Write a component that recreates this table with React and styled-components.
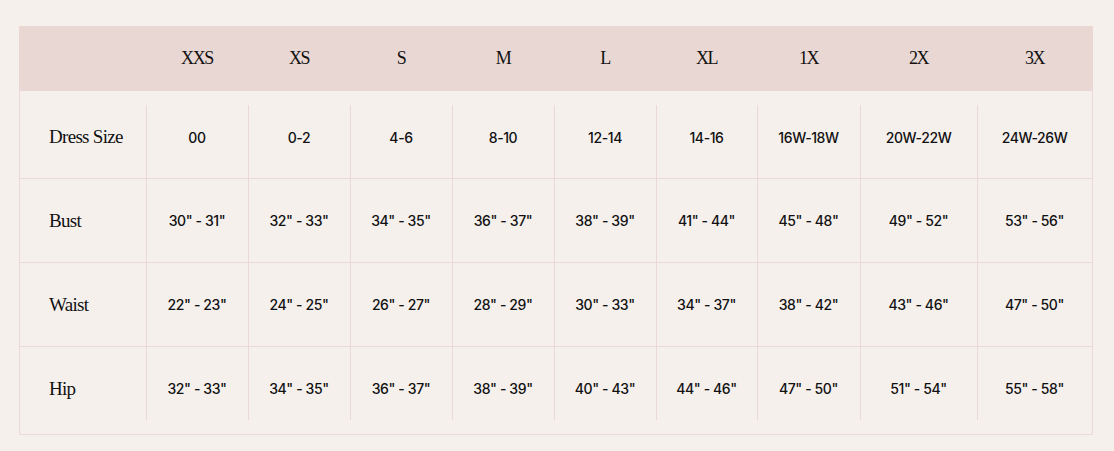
import styled, { createGlobalStyle } from "styled-components";

const GlobalStyle = createGlobalStyle`
  html, body {
    margin: 0;
    padding: 0;
    background: #f6f0ed;
  }
  * { box-sizing: border-box; }
`;

const sizes = ["XXS", "XS", "S", "M", "L", "XL", "1X", "2X", "3X"];

const rows = [
  { label: "Dress Size", values: ["00", "0-2", "4-6", "8-10", "12-14", "14-16", "16W-18W", "20W-22W", "24W-26W"] },
  { label: "Bust", values: ['30" - 31"', '32" - 33"', '34" - 35"', '36" - 37"', '38" - 39"', '41" - 44"', '45" - 48"', '49" - 52"', '53" - 56"'] },
  { label: "Waist", values: ['22" - 23"', '24" - 25"', '26" - 27"', '28" - 29"', '30" - 33"', '34" - 37"', '38" - 42"', '43" - 46"', '47" - 50"'] },
  { label: "Hip", values: ['32" - 33"', '34" - 35"', '36" - 37"', '38" - 39"', '40" - 43"', '44" - 46"', '47" - 50"', '51" - 54"', '55" - 58"'] },
];

function App() {
  return (
    <Page>
      <GlobalStyle />
      <Chart>
        <HeadRow>
          <HeadCell />
          {sizes.map((s) => (
            <HeadCell key={s}>{s}</HeadCell>
          ))}
        </HeadRow>
        {rows.map((row, r) => {
          const first = r === 0;
          const last = r === rows.length - 1;
          return (
            <BodyRow key={row.label} $first={first} $last={last}>
              <Label>{row.label}</Label>
              {row.values.map((v, i) => (
                <Cell key={i} $first={first} $last={last}>
                  {v}
                </Cell>
              ))}
            </BodyRow>
          );
        })}
      </Chart>
    </Page>
  );
}

export default App;

const cols = "126px 102px 102px 102px 102px 102px 101px 103px 117px 1fr";
const line = "#ead9d5";

const Page = styled.div`
  padding: 26px 21px 16px 19px;
`;

const Chart = styled.div`
  border: 1px solid ${line};
  border-top: none;
  display: flex;
  flex-direction: column;
`;

const HeadRow = styled.div`
  display: grid;
  grid-template-columns: ${cols};
  height: 65px;
  background: #e9d7d3;
  margin: 0 -1px;
  padding: 0 1px;
`;

const HeadCell = styled.div`
  display: flex;
  align-items: center;
  justify-content: center;
  font-family: "Liberation Serif", "DejaVu Serif", serif;
  font-size: 18px;
  letter-spacing: -1.4px;
  color: #111;
`;

const BodyRow = styled.div`
  display: grid;
  grid-template-columns: ${cols};
  height: ${(p) => (p.$first ? 88 : p.$last ? 87 : 84)}px;
  padding-top: ${(p) => (p.$first ? 5 : 0)}px;
  padding-bottom: ${(p) => (p.$last ? 4 : 0)}px;
  border-bottom: ${(p) => (p.$last ? "none" : `1px solid ${line}`)};
`;

const Label = styled.div`
  display: flex;
  align-items: center;
  padding-left: 29px;
  font-family: "Liberation Serif", "DejaVu Serif", serif;
  font-size: 19px;
  letter-spacing: -0.7px;
  color: #111;
`;

const Cell = styled.div`
  display: flex;
  align-items: center;
  justify-content: center;
  font-family: Inter, "Liberation Sans", sans-serif;
  font-weight: 500;
  font-size: 14px;
  letter-spacing: -0.4px;
  color: #111;
  background-image: linear-gradient(${line}, ${line});
  background-repeat: no-repeat;
  background-origin: border-box;
  background-size: 1px
    ${(p) => (p.$first || p.$last ? "calc(100% - 14px)" : "100%")};
  background-position: ${(p) => (p.$first ? "left bottom" : "left top")};
  margin-top: ${(p) => (p.$first ? -5 : 0)}px;
  padding-top: ${(p) => (p.$first ? 5 : 0)}px;
  margin-bottom: ${(p) => (p.$last ? -4 : 0)}px;
  padding-bottom: ${(p) => (p.$last ? 4 : 0)}px;
`;
